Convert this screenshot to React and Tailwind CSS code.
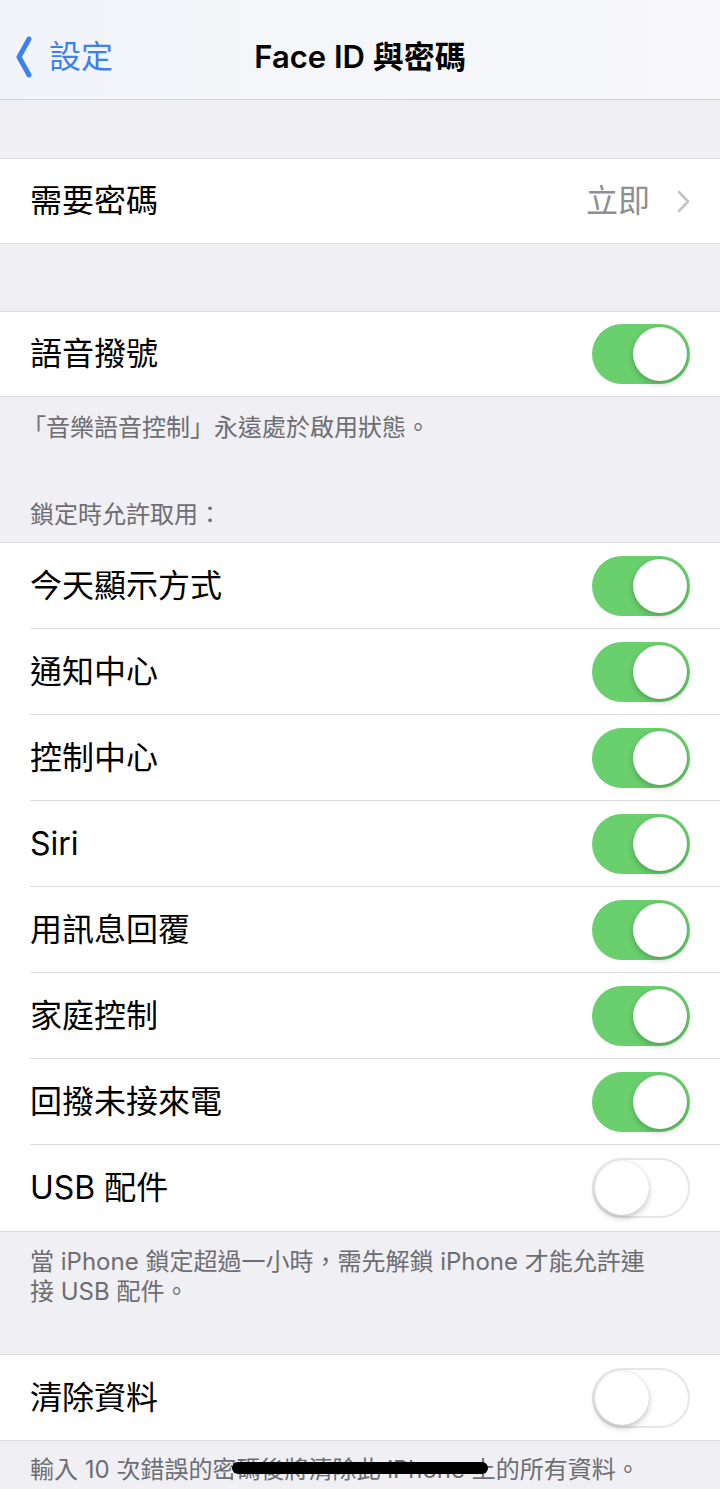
const font = { fontFamily: '"Inter", "Noto Sans CJK TC", sans-serif' };

const Toggle = ({ on }) => (
  <div
    className={
      on
        ? "flex h-[60px] w-[98px] items-center justify-end rounded-full bg-[#69d06d] p-[3px]"
        : "flex h-[60px] w-[98px] items-center justify-start rounded-full border-2 border-[#e6e6e9] bg-white p-[1px]"
    }
  >
    <div className="h-[54px] w-[54px] rounded-full bg-white shadow-[0_3px_6px_rgba(0,0,0,0.22),0_0_1px_rgba(0,0,0,0.2)]" />
  </div>
);

const Row = ({ label, on, last, h = "h-[86px]" }) => (
  <div className={"flex items-center pl-[30px] " + h}>
    <div
      className={
        "flex h-full flex-1 items-center justify-between pr-[30px] " +
        (last ? "" : "border-b border-[#dcdce0]")
      }
    >
      <span className="text-[32px] leading-none text-black">{label}</span>
      <Toggle on={on} />
    </div>
  </div>
);

const lockItems = [
  { label: "今天顯示方式", on: true },
  { label: "通知中心", on: true },
  { label: "控制中心", on: true },
  { label: "Siri", on: true },
  { label: "用訊息回覆", on: true },
  { label: "家庭控制", on: true },
  { label: "回撥未接來電", on: true },
  { label: "USB 配件", on: false },
];

export default function App() {
  return (
    <div className="relative min-h-[1489px] w-[720px] overflow-hidden bg-[#efeff4]" style={font}>
      {/* Nav bar */}
      <div className="relative flex h-[100px] items-center border-b border-[#d2d2d6] bg-gradient-to-r from-[#f1f4fa] to-[#f8f8f9] pt-[14px]">
        <div className="flex items-center pl-[16px]">
          <svg width="16" height="42" viewBox="0 0 16 42" className="mr-[17px]">
            <path d="M13 3 L3 21 L13 39" fill="none" stroke="#3d80f0" strokeWidth="5" strokeLinecap="round" strokeLinejoin="round" />
          </svg>
          <span className="text-[32px] leading-none text-[#3d80f0]">設定</span>
        </div>
        <div className="pointer-events-none absolute inset-x-0 flex justify-center">
          <span className="text-[31px] font-semibold leading-none text-black">Face ID 與密碼</span>
        </div>
      </div>

      <div className="h-[58px]" />

      {/* Require passcode */}
      <div className="flex h-[86px] items-center justify-between border-y border-[#dcdce0] bg-white pl-[30px] pr-[30px]">
        <span className="text-[32px] leading-none text-black">需要密碼</span>
        <div className="flex items-center gap-[27px]">
          <span className="text-[32px] leading-none text-[#8e8e93]">立即</span>
          <svg width="13" height="23" viewBox="0 0 13 23">
            <path d="M2 2 L11 11.5 L2 21" fill="none" stroke="#c4c4c9" strokeWidth="2.6" strokeLinecap="round" strokeLinejoin="round" />
          </svg>
        </div>
      </div>

      <div className="h-[67px]" />

      {/* Voice dial */}
      <div className="border-y border-[#dcdce0] bg-white">
        <Row label="語音撥號" on last h="h-[84px]" />
      </div>
      <div className="px-[22px] pt-[19px] text-[24px] leading-[24px] text-[#6d6d72]">
        「音樂語音控制」永遠處於啟用狀態。
      </div>
      <div className="px-[30px] pt-[63px] pb-[15px] text-[24px] leading-[24px] text-[#6d6d72]">
        鎖定時允許取用：
      </div>

      {/* Allow access when locked */}
      <div className="border-y border-[#dcdce0] bg-white">
        {lockItems.map((it, i) => (
          <Row key={it.label} label={it.label} on={it.on} last={i === lockItems.length - 1} />
        ))}
      </div>
      <div className="pl-[30px] pr-[60px] pt-[15px] text-[24px] leading-[30px] text-[#6d6d72]">
        當 iPhone 鎖定超過一小時，需先解鎖 iPhone 才能允許連接 USB 配件。
      </div>

      <div className="h-[47px]" />

      {/* Erase data */}
      <div className="border-y border-[#dcdce0] bg-white">
        <Row label="清除資料" on={false} last h="h-[85px]" />
      </div>
      <div className="px-[30px] pt-[17px] text-[24px] leading-[24px] text-[#6d6d72]">
        輸入 10 次錯誤的密碼後將清除此 iPhone 上的所有資料。
      </div>

      {/* Home indicator */}
      <div className="absolute left-[232px] top-[1462px] h-[12px] w-[256px] rounded-full bg-black" />
    </div>
  );
}
